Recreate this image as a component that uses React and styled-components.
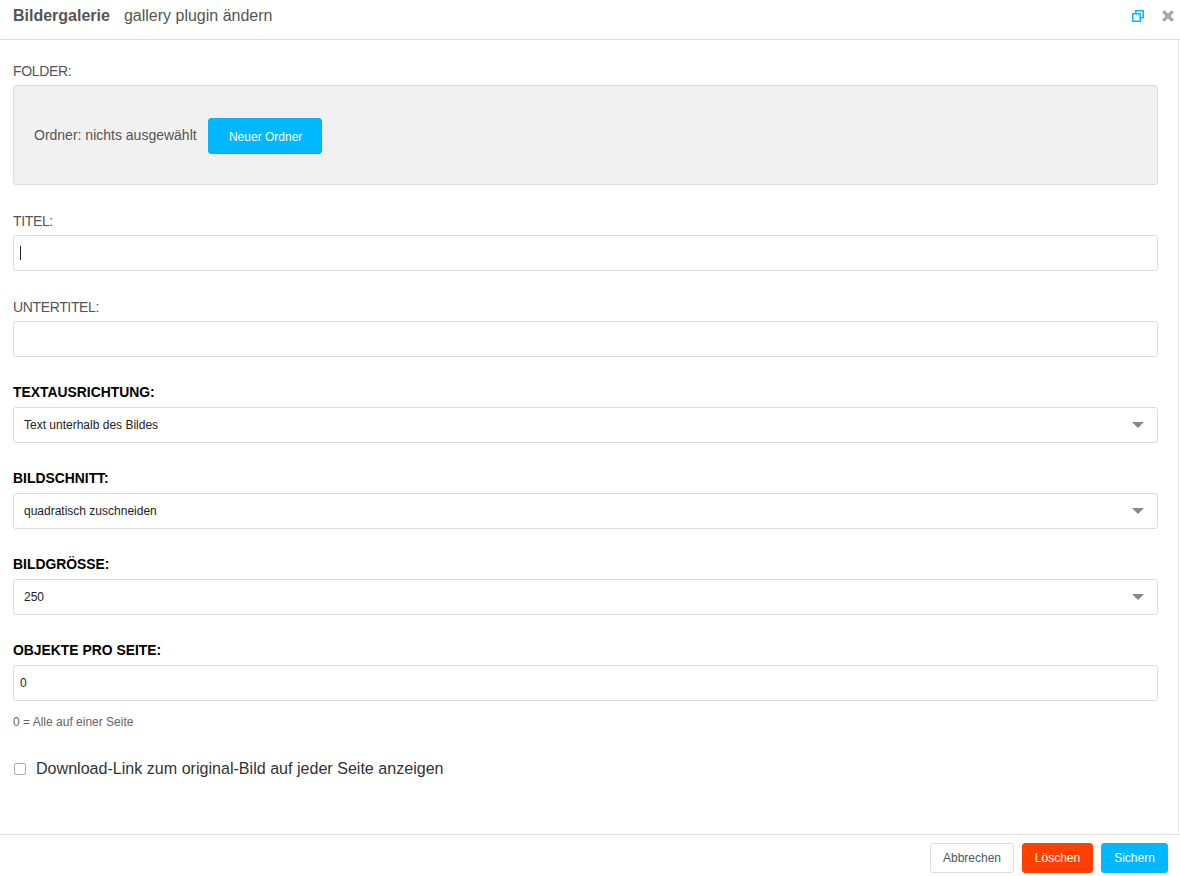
import React from "react";
import styled, { createGlobalStyle } from "styled-components";

const GlobalStyle = createGlobalStyle`
  html, body {
    margin: 0;
    padding: 0;
    background: #fff;
    font-family: "Liberation Sans", Arial, sans-serif;
  }
`;

const Dialog = styled.div`
  width: 1180px;
  height: 876px;
  display: flex;
  flex-direction: column;
  overflow: hidden;
  background: #fff;
  color: #555;
`;

const Header = styled.header`
  height: 31px;
  flex: none;
  display: flex;
  align-items: center;
  padding: 0 5px 8px 13px;
  border-bottom: 1px solid #ddd;
`;

const Title = styled.h1`
  margin: 0;
  font-size: 16px;
  font-weight: bold;
  color: #555;
`;

const Subtitle = styled.span`
  margin-left: 14px;
  font-size: 16px;
  color: #555;
  flex: 1;
`;

const HeaderIcons = styled.div`
  display: flex;
  align-items: center;
  gap: 18px;
  margin: 1px 1px 0 0;
`;

const Body = styled.main`
  flex: 1;
  padding: 24px 20px 0 13px;
  border-right: 1px solid #e8e8e8;
  margin-right: 1px;
`;

const Group = styled.div`
  margin-bottom: 29px;
`;

const Label = styled.label`
  display: block;
  height: 14px;
  line-height: ${(p) => (p.$strong ? 13 : 14)}px;
  margin-bottom: 7px;
  font-size: ${(p) => (p.$strong ? 13.9 : 14)}px;
  letter-spacing: ${(p) => (p.$strong ? 0 : -0.36)}px;
  text-transform: uppercase;
  font-weight: ${(p) => (p.$strong ? "bold" : "normal")};
  color: ${(p) => (p.$strong ? "#000" : "#555")};
`;

const Panel = styled.div`
  height: 100px;
  box-sizing: border-box;
  display: flex;
  align-items: center;
  gap: 10px;
  padding: 0 20px;
  background: #f1f1f1;
  border: 1px solid #dcdcdc;
  border-radius: 3px;
  font-size: 14px;
  color: #555;
`;

const Button = styled.button`
  height: 30px;
  width: ${(p) => p.$width}px;
  padding: 0;
  box-sizing: border-box;
  border: 1px solid ${(p) => p.$bg || "#ddd"};
  border-radius: 3px;
  background: ${(p) => p.$bg || "#fff"};
  color: ${(p) => (p.$bg ? "#fff" : "#555")};
  font-family: inherit;
  font-size: 12px;
`;

const PanelButton = styled(Button)`
  height: 36px;
  margin: 2px 0 0 1px;
  padding: 2px 0 0 2px;
`;

const Field = styled.div`
  height: 36px;
  box-sizing: border-box;
  display: flex;
  align-items: center;
  justify-content: space-between;
  padding: 0 18px 0 ${(p) => (p.$select ? 10 : 6)}px;
  border: 1px solid #dcdcdc;
  border-radius: 3px;
  background: #fff;
  font-size: 12px;
  color: #222;
`;

const Caret = styled.span`
  width: 1px;
  height: 14px;
  background: #222;
`;

const Arrow = styled.span`
  width: 0;
  height: 0;
  margin-right: -5px;
  border-left: 6px solid transparent;
  border-right: 6px solid transparent;
  border-top: 6px solid #888;
`;

const Hint = styled.div`
  margin-top: 14px;
  height: 14px;
  line-height: 14px;
  font-size: 12px;
  color: #666;
`;

const CheckRow = styled.label`
  display: flex;
  align-items: center;
  gap: 10px;
  margin-top: 30px;
  padding-left: 1px;
  font-size: 16.08px;
  color: #333;
`;

const CheckBox = styled.span`
  width: 10px;
  height: 10px;
  border: 1px solid #aaa;
  border-radius: 2px;
  background: #fff;
`;

const Footer = styled.footer`
  height: 42px;
  flex: none;
  display: flex;
  justify-content: flex-end;
  gap: 8px;
  padding: 8px 12px 0 0;
  box-sizing: border-box;
  border-top: 1px solid #ddd;
`;

const selects = [
  ["Textausrichtung:", "Text unterhalb des Bildes"],
  ["Bildschnitt:", "quadratisch zuschneiden"],
  ["Bildgröße:", "250"],
];

export default function App() {
  return (
    <Dialog>
      <GlobalStyle />
      <Header>
        <Title>Bildergalerie</Title>
        <Subtitle>gallery plugin ändern</Subtitle>
        <HeaderIcons>
          <svg width="12" height="12" viewBox="0 0 12 12" fill="none" stroke="#00b8ff" strokeWidth="1.5">
            <rect x="0.75" y="3.75" width="7.5" height="7.5" />
            <path d="M3.75 3.5V0.75h7.5v7H8.5" />
          </svg>
          <svg width="12" height="12" viewBox="0 0 12 12" fill="none" stroke="#aaa" strokeWidth="3.4">
            <path d="M1.2 1.2l9.6 9.6M10.8 1.2l-9.6 9.6" />
          </svg>
        </HeaderIcons>
      </Header>
      <Body>
        <Group>
          <Label>Folder:</Label>
          <Panel>
            Ordner: nichts ausgewählt
            <PanelButton $width={114} $bg="#00b8ff">Neuer Ordner</PanelButton>
          </Panel>
        </Group>
        <Group>
          <Label>Titel:</Label>
          <Field><Caret /></Field>
        </Group>
        <Group>
          <Label>Untertitel:</Label>
          <Field />
        </Group>
        {selects.map(([label, value]) => (
          <Group key={label}>
            <Label $strong>{label}</Label>
            <Field $select>
              {value}
              <Arrow />
            </Field>
          </Group>
        ))}
        <Label $strong>Objekte pro Seite:</Label>
        <Field>0</Field>
        <Hint>0 = Alle auf einer Seite</Hint>
        <CheckRow>
          <CheckBox />
          Download-Link zum original-Bild auf jeder Seite anzeigen
        </CheckRow>
      </Body>
      <Footer>
        <Button $width={84}>Abbrechen</Button>
        <Button $width={71} $bg="#ff4000">Löschen</Button>
        <Button $width={67} $bg="#00b8ff">Sichern</Button>
      </Footer>
    </Dialog>
  );
}
